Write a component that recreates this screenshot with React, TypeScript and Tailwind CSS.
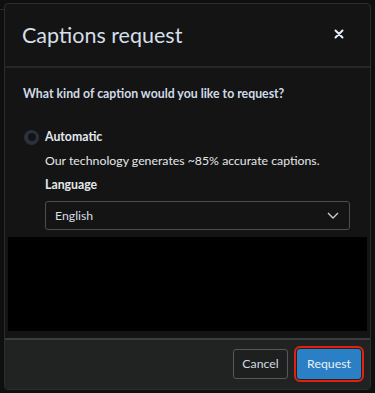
import React from "react";

export default function App() {
  return (
    <div
      className="w-[375px] h-[393px] bg-[#0f0f0f] relative overflow-hidden"
      style={{ fontFamily: "Lato, 'Noto Sans', sans-serif" }}
    >
      <div className="absolute left-0 top-[9px] w-[10px] h-[1px] bg-[#2a2a2a]" />
      <div className="absolute left-[4px] top-[3px] w-[367px] h-[387px] rounded-[4px] border border-[#2c2c2c] bg-[#141414] flex flex-col overflow-hidden">
        <div className="h-[64px] flex items-center justify-between pl-[17px] pr-[26px] border-b-2 border-[#262626] shrink-0">
          <span className="text-[21.5px] text-[#d5dfe9] leading-none mt-[1px]">Captions request</span>
          <svg width="10" height="10" viewBox="0 0 10 10" className="mt-[-2px]">
            <path d="M1.5 1.5 L8.5 8.5 M8.5 1.5 L1.5 8.5" stroke="#e6eef6" strokeWidth="2" strokeLinecap="round" />
          </svg>
        </div>
        <div className="flex flex-col pt-[18px] shrink-0">
          <div className="pl-[18px] text-[12.3px] font-bold text-[#cfdbe6] leading-[16px]">
            What kind of caption would you like to request?
          </div>
          <div className="flex items-center pl-[19px] mt-[26px]">
            <span className="w-[15px] h-[15px] rounded-full bg-[#2a323b] flex items-center justify-center">
              <span className="w-[8px] h-[8px] rounded-full bg-[#121417]" />
            </span>
            <span className="ml-[6px] text-[12.3px] font-bold text-[#e4eaf0]">Automatic</span>
          </div>
          <div className="pl-[40px] mt-[6px] text-[12.3px] text-[#e4e8ec] leading-[17px]">
            Our technology generates ~85% accurate captions.
          </div>
          <div className="pl-[40px] mt-[7px] text-[12.3px] font-bold text-[#e4e8ec] leading-[17px]">Language</div>
          <div className="ml-[40px] mr-[20px] mt-[8px] h-[29px] rounded-[3px] border border-[#4b4f54] flex items-center justify-between pl-[9px] pr-[10px]">
            <span className="text-[12.3px] text-[#d7dee5]">English</span>
            <svg width="12" height="7" viewBox="0 0 12 7">
              <path d="M1 1 L6 6 L11 1" stroke="#c9d2db" strokeWidth="1.3" fill="none" />
            </svg>
          </div>
        </div>
        <div className="mx-[3px] mt-[7px] h-[94px] bg-black shrink-0" />
        <div className="mt-[7px] h-[2px] bg-[#3b3c3c] shrink-0" />
        <div className="flex-1 bg-[#212323] flex items-center justify-end gap-[6px] pr-[6px] pb-[2px]">
          <button className="h-[30px] w-[55px] rounded-[3px] border border-[#54585c] bg-[#1e2020] text-[12.3px] text-[#d6dce2]">
            Cancel
          </button>
          <div className="rounded-[6px] border-2 border-[#e3200f] p-[1px]">
            <button className="h-[30px] w-[64px] rounded-[3px] bg-[#2b7fc4] text-[12.3px] text-[#e9f2fa]">
              Request
            </button>
          </div>
        </div>
      </div>
    </div>
  );
}
